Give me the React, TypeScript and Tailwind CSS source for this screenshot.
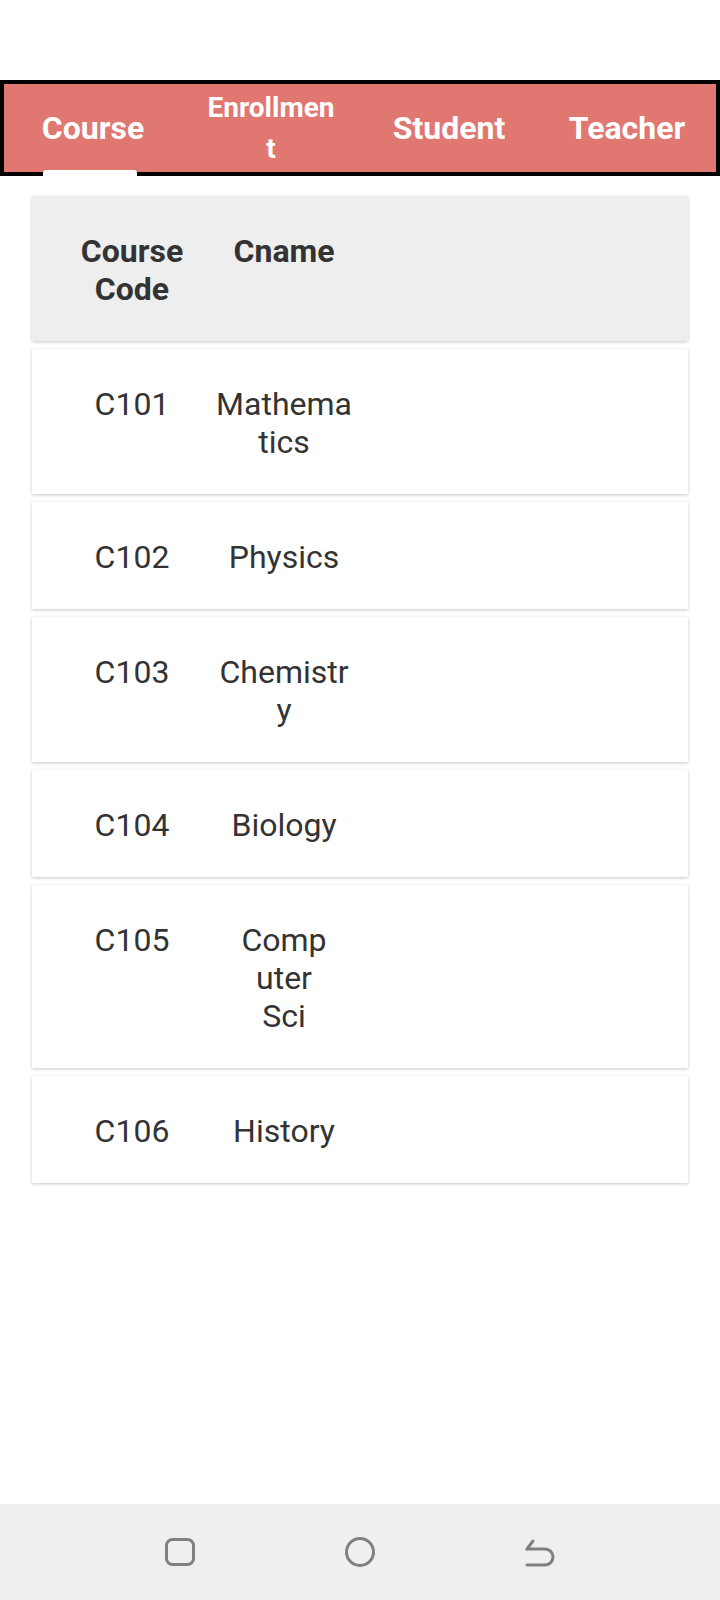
import React from 'react';

const tabs = [
  { label: 'Course', size: 'text-[32px]' },
  { label: 'Enrollmen\nt', size: 'text-[28px] leading-[41px]' },
  { label: 'Student', size: 'text-[32px]' },
  { label: 'Teacher', size: 'text-[32px]' },
];

// names are pre-wrapped the way the device broke them
const courses = [
  { code: 'C101', name: 'Mathema\ntics' },
  { code: 'C102', name: 'Physics' },
  { code: 'C103', name: 'Chemistr\ny' },
  { code: 'C104', name: 'Biology' },
  { code: 'C105', name: 'Comp\nuter\nSci' },
  { code: 'C106', name: 'History' },
];

function Row({ a, b, head }: { a: string; b: string; head?: boolean }) {
  return (
    <div
      className={`flex pl-[24px] pt-[36px] pb-[33px] shadow-[0_1px_3px_rgba(0,0,0,0.22)] ${
        head ? 'bg-[#eeeeee] font-bold' : 'bg-white'
      }`}
    >
      <div className="w-[152px] text-center whitespace-pre-line">{a}</div>
      <div className="w-[152px] text-center whitespace-pre-line">{b}</div>
    </div>
  );
}

export default function App() {
  return (
    <div
      className="w-[720px] h-[1600px] bg-white flex flex-col text-[#333333]"
      style={{ fontFamily: 'Roboto, "Noto Sans", sans-serif' }}
    >
      <div className="h-[80px]" />

      <div className="relative h-[96px] border-4 border-black bg-[#e07770] grid grid-cols-4">
        {tabs.map(t => (
          <div key={t.label} className="flex items-center justify-center">
            <span className={`text-white font-bold text-center whitespace-pre-line ${t.size}`}>
              {t.label}
            </span>
          </div>
        ))}
        <div className="absolute left-[39px] bottom-[-4px] w-[94px] h-[6px] bg-white rounded-t-[3px]" />
      </div>

      <div className="mt-[20px] px-8 flex flex-col gap-[8px] text-[32px] leading-[38px]">
        <Row a={'Course\nCode'} b="Cname" head />
        {courses.map(c => (
          <Row key={c.code} a={c.code} b={c.name} />
        ))}
      </div>

      <div className="mt-auto h-[96px] bg-[#efefef] flex items-center justify-center">
        <div className="w-[180px] flex justify-center">
          <svg width="32" height="32" viewBox="0 0 32 32" fill="none" stroke="#808080" strokeWidth="3">
            <rect x="2.5" y="3.5" width="27" height="25" rx="6" />
          </svg>
        </div>
        <div className="w-[180px] flex justify-center">
          <svg width="32" height="32" viewBox="0 0 32 32" fill="none" stroke="#808080" strokeWidth="3">
            <circle cx="16" cy="16" r="13.5" />
          </svg>
        </div>
        <div className="w-[180px] flex justify-center">
          <svg width="32" height="32" viewBox="0 0 32 32" fill="none" stroke="#808080" strokeWidth="3" strokeLinecap="round" strokeLinejoin="round">
            <path d="M3 13 H21 A8 8 0 0 1 21 29 H3" />
            <path d="M3 13 L9 5" />
          </svg>
        </div>
      </div>
    </div>
  );
}
